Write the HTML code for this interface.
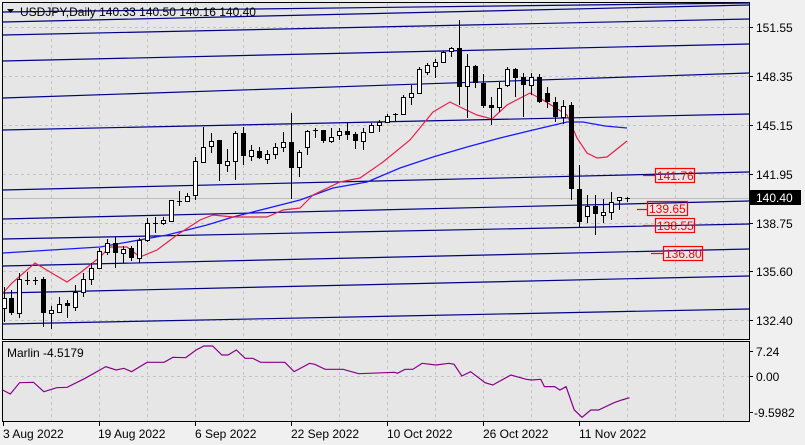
<!DOCTYPE html>
<html><head><meta charset="utf-8"><style>
html,body{margin:0;padding:0;background:#f0f0f0;width:805px;height:445px;overflow:hidden}
svg{display:block}
text{font-family:"Liberation Sans",sans-serif;font-size:12px;fill:#000}
</style></head><body>
<svg width="805" height="445" viewBox="0 0 805 445" xmlns="http://www.w3.org/2000/svg">
<rect x="0" y="0" width="805" height="445" fill="#f0f0f0"/>
<rect x="2.5" y="2.5" width="747" height="337" fill="#e6e6e6" stroke="#000"/>
<rect x="2.5" y="341.5" width="747" height="80" fill="#e6e6e6" stroke="#000"/>
<g stroke="#c4c4c4" stroke-dasharray="3,3" stroke-width="1">
<path d="M51.5 3V339M99.5 3V339M147.5 3V339M195.5 3V339M243.5 3V339M291.5 3V339M339.5 3V339M387.5 3V339M435.5 3V339M483.5 3V339M531.5 3V339M579.5 3V339M627.5 3V339M675.5 3V339M723.5 3V339"/>
<path d="M51.5 342V421M99.5 342V421M147.5 342V421M195.5 342V421M243.5 342V421M291.5 342V421M339.5 342V421M387.5 342V421M435.5 342V421M483.5 342V421M531.5 342V421M579.5 342V421M627.5 342V421M675.5 342V421M723.5 342V421"/>
<path d="M3 27.5H749M3 76.5H749M3 125.5H749M3 174.5H749M3 223.5H749M3 271.5H749M3 320.5H749M3 376.5H749"/>
</g>
<path d="M3 198.5H749" stroke="#bdbdbd"/>
<g stroke="#00008b" stroke-width="1.2" fill="none">
<path d="M3 12L749 3"/>
<path d="M3 22L749 5"/>
<path d="M3 35L749 19"/>
<path d="M3 61L749 44"/>
<path d="M3 98L749 73"/>
<path d="M3 130L749 114"/>
<path d="M3 190L749 172"/>
<path d="M3 219L749 201"/>
<path d="M3 239L749 224"/>
<path d="M3 266L749 249"/>
<path d="M3 293L749 276"/>
<path d="M3 324L749 309"/>
</g>
<polyline fill="none" stroke="#1a1aff" stroke-width="1.3" points="3,253 100,247 167,235 207,225 233,217 300,200 333,188 367,182 400,168 433,157 467,147 500,138 533,130 567,122 583,122 605,126 627,128"/>
<polyline fill="none" stroke="#e8204a" stroke-width="1.2" points="3,293 12,283 35,263 50,272 67,282 80,273 100,257 110,247 127,247 140,257 157,250 177,235 200,220 213,215 233,217 257,217 267,217 283,210 300,208 313,195 340,182 360,178 383,162 410,140 433,112 450,102 460,107 477,115 492,119 507,105 530,93 543,100 567,115 577,138 587,153 597,158 607,157 627,141"/>
<path stroke="#000" stroke-width="1" fill="none" d="M4.5 287V322M11.5 290V315M19.5 273V318M27.5 272V285M35.5 277V285M43.5 277V327M51.5 306V329M59.5 297V313M67.5 300V318M75.5 285V311M83.5 273V297M91.5 263V285M99.5 248V269M107.5 239V255M115.5 237V268M123.5 246V263M131.5 246V261M139.5 238V263M147.5 218V242M155.5 217V233M163.5 217V225M171.5 200V222M179.5 191V206M187.5 193V202M195.5 157V200M203.5 127V163M211.5 133V153M219.5 140V181M227.5 149V172M235.5 131V180M243.5 127V165M251.5 145V161M259.5 147V159M267.5 150V164M275.5 143V159M283.5 132V152M291.5 113V199M299.5 150V177M307.5 130V155M315.5 128V138M323.5 130V143M331.5 128V143M339.5 128V140M347.5 122V140M355.5 132V149M363.5 128V150M371.5 123V132M379.5 120V132M387.5 114V123M395.5 113V122M403.5 95V115M411.5 85V105M419.5 67V94M427.5 63V75M435.5 59V78M443.5 51V63M451.5 47V57M459.5 20V105M467.5 54V118M475.5 65V88M483.5 74V108M491.5 97V125M499.5 82V112M507.5 67V87M515.5 68V97M523.5 73V117M531.5 73V95M539.5 74V103M547.5 87V108M555.5 97V122M563.5 100V124M571.5 102V200M579.5 165V227M587.5 195V223M595.5 195V235M603.5 199V223M611.5 192V220M619.5 197V210M627.5 197V202M25 280.5H30M33 280.5H38M153 223.5H158M177 201.5H182M313 130.5H318M393 114.5H398M625 198.5H630"/>
<g fill="#fff" stroke="#000" stroke-width="1">
<rect x="2.5" y="298.5" width="4" height="10"/>
<rect x="17.5" y="279.5" width="4" height="34"/>
<rect x="49.5" y="310.5" width="4" height="3"/>
<rect x="57.5" y="304.5" width="4" height="8"/>
<rect x="73.5" y="292.5" width="4" height="15"/>
<rect x="81.5" y="279.5" width="4" height="13"/>
<rect x="89.5" y="268.5" width="4" height="11"/>
<rect x="97.5" y="251.5" width="4" height="17"/>
<rect x="105.5" y="243.5" width="4" height="9"/>
<rect x="121.5" y="249.5" width="4" height="4"/>
<rect x="137.5" y="240.5" width="4" height="18"/>
<rect x="145.5" y="223.5" width="4" height="17"/>
<rect x="161.5" y="220.5" width="4" height="3"/>
<rect x="169.5" y="200.5" width="4" height="21"/>
<rect x="185.5" y="196.5" width="4" height="5"/>
<rect x="193.5" y="161.5" width="4" height="34"/>
<rect x="201.5" y="147.5" width="4" height="15"/>
<rect x="209.5" y="141.5" width="4" height="5"/>
<rect x="225.5" y="161.5" width="4" height="4"/>
<rect x="233.5" y="133.5" width="4" height="28"/>
<rect x="249.5" y="150.5" width="4" height="6"/>
<rect x="265.5" y="154.5" width="4" height="5"/>
<rect x="273.5" y="147.5" width="4" height="7"/>
<rect x="281.5" y="142.5" width="4" height="5"/>
<rect x="297.5" y="152.5" width="4" height="15"/>
<rect x="305.5" y="131.5" width="4" height="16"/>
<rect x="329.5" y="137.5" width="4" height="4"/>
<rect x="337.5" y="131.5" width="4" height="4"/>
<rect x="361.5" y="132.5" width="4" height="9"/>
<rect x="369.5" y="125.5" width="4" height="7"/>
<rect x="377.5" y="122.5" width="4" height="3"/>
<rect x="385.5" y="116.5" width="4" height="6"/>
<rect x="401.5" y="97.5" width="4" height="17"/>
<rect x="409.5" y="93.5" width="4" height="4"/>
<rect x="417.5" y="69.5" width="4" height="24"/>
<rect x="425.5" y="65.5" width="4" height="7"/>
<rect x="433.5" y="62.5" width="4" height="4"/>
<rect x="441.5" y="52.5" width="4" height="10"/>
<rect x="449.5" y="48.5" width="4" height="3"/>
<rect x="465.5" y="66.5" width="4" height="20"/>
<rect x="497.5" y="88.5" width="4" height="19"/>
<rect x="505.5" y="69.5" width="4" height="16"/>
<rect x="529.5" y="77.5" width="4" height="8"/>
<rect x="561.5" y="106.5" width="4" height="11"/>
<rect x="585.5" y="206.5" width="4" height="10"/>
<rect x="601.5" y="212.5" width="4" height="3"/>
<rect x="609.5" y="202.5" width="4" height="10"/>
<rect x="617.5" y="197.5" width="4" height="3"/>
</g>
<g fill="#000">
<rect x="9" y="298" width="5" height="15"/>
<rect x="41" y="279" width="5" height="34"/>
<rect x="65" y="303" width="5" height="3"/>
<rect x="113" y="243" width="5" height="10"/>
<rect x="129" y="248" width="5" height="10"/>
<rect x="217" y="140" width="5" height="24"/>
<rect x="241" y="133" width="5" height="23"/>
<rect x="257" y="151" width="5" height="7"/>
<rect x="289" y="142" width="5" height="26"/>
<rect x="321" y="130" width="5" height="11"/>
<rect x="345" y="131" width="5" height="4"/>
<rect x="353" y="134" width="5" height="7"/>
<rect x="457" y="48" width="5" height="39"/>
<rect x="473" y="66" width="5" height="17"/>
<rect x="481" y="83" width="5" height="23"/>
<rect x="489" y="105" width="5" height="3"/>
<rect x="513" y="69" width="5" height="9"/>
<rect x="521" y="77" width="5" height="8"/>
<rect x="537" y="77" width="5" height="25"/>
<rect x="545" y="93" width="5" height="9"/>
<rect x="553" y="102" width="5" height="15"/>
<rect x="569" y="105" width="5" height="84"/>
<rect x="577" y="189" width="5" height="33"/>
<rect x="593" y="206" width="5" height="8"/>
</g>
<g fill="none" stroke="#ff0000" stroke-width="1.2">
<rect x="655.5" y="168.5" width="39" height="14"/><path d="M643 175.5H656"/>
<rect x="647.5" y="201.5" width="40" height="14"/><path d="M637 209.5H648"/>
<rect x="655.5" y="218.5" width="39" height="14"/><path d="M643 225.5H656"/>
<rect x="663.5" y="246.5" width="39" height="14"/><path d="M651 253.5H664"/>
</g>
<text x="657" y="180" style="fill:#ff0000">141.76</text>
<text x="649" y="213" style="fill:#ff0000">139.65</text>
<text x="657" y="230" style="fill:#ff0000">138.55</text>
<text x="665" y="258" style="fill:#ff0000">136.80</text>
<path d="M7 9H14L10.5 13Z" fill="#000"/>
<text x="20" y="16">USDJPY,Daily  140.33 140.50 140.16 140.40</text>
<path stroke="#000" d="M749 27.5h4M749 76.5h4M749 125.5h4M749 174.5h4M749 223.5h4M749 271.5h4M749 320.5h4M749 351.5h4M749 376.5h4M749 412.5h4"/>
<text x="756" y="32">151.55</text>
<text x="756" y="81">148.35</text>
<text x="756" y="130">145.15</text>
<text x="756" y="179">141.95</text>
<text x="756" y="228">138.75</text>
<text x="756" y="276">135.60</text>
<text x="756" y="325">132.40</text>
<rect x="750" y="190" width="51" height="15" fill="#000"/>
<text x="756" y="202" style="fill:#fff">140.40</text>
<text x="756" y="356">7.24</text>
<text x="756" y="381">0.00</text>
<text x="754" y="417">-9.5982</text>
<text x="7" y="357">Marlin -4.5179</text>
<g transform="translate(0,330) scale(0.516,0.3333)">
<polyline fill="none" stroke="#8b008b" stroke-width="1.2" vector-effect="non-scaling-stroke" points="5,180 20,192 38,158 65,157 85,185 110,173 130,172 165,145 205,110 225,120 240,115 255,125 285,97 318,97 335,82 360,83 380,60 395,48 412,48 430,75 442,75 458,60 475,85 490,85 505,97 552,97 570,125 600,100 610,103 630,118 665,118 695,131 765,127 770,130 785,118 800,118 818,100 845,105 870,100 880,103 895,138 912,125 940,158 955,165 990,135 1020,148 1030,150 1048,148 1055,170 1075,170 1085,180 1097,170 1113,240 1128,262 1145,240 1160,240 1190,218 1205,210 1220,203"/>
</g>
<path stroke="#000" d="M3.5 422v4M99.5 422v4M195.5 422v4M291.5 422v4M387.5 422v4M483.5 422v4M579.5 422v4"/>
<text x="3" y="438">3 Aug 2022</text>
<text x="98" y="438">19 Aug 2022</text>
<text x="195" y="438">6 Sep 2022</text>
<text x="291" y="438">22 Sep 2022</text>
<text x="387" y="438">10 Oct 2022</text>
<text x="483" y="438">26 Oct 2022</text>
<text x="579" y="438">11 Nov 2022</text>
</svg>
</body></html>
